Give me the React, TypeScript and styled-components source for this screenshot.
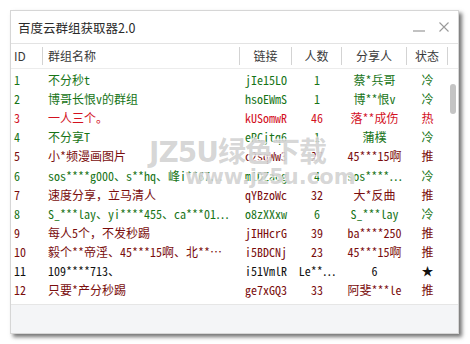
import styled, { createGlobalStyle } from 'styled-components';

const GlobalStyle = createGlobalStyle`
  html, body {
    margin: 0;
    padding: 0;
    background: #ffffff;
  }
  body {
    width: 470px;
    height: 344px;
    overflow: hidden;
  }
`;

const mono = `"Noto Sans Mono CJK SC", "Liberation Mono", "Noto Sans CJK SC", monospace`;

type Tone = 'green' | 'red' | 'maroon' | 'black';

const toneColor: Record<Tone, string> = {
  green: '#177417',
  red: '#d3121f',
  maroon: '#7a0d0d',
  black: '#111111',
};

const Page = styled.div`
  padding: 10px 0 0 10px;
`;

const Window = styled.div`
  position: relative;
  width: 447px;
  height: 322px;
  border: 1px solid #d6d6d6;
  background: #ffffff;
  box-shadow: 3px 3px 4px rgba(0, 0, 0, 0.55);
  display: flex;
  flex-direction: column;
  overflow: hidden;
`;

const TitleBar = styled.div`
  height: 32px;
  flex: none;
  display: flex;
  align-items: center;
  padding: 0 0 0 7px;
  border-bottom: 1px solid #e3e3e3;
`;

const Title = styled.div`
  flex: 1;
  font-family: "Noto Sans CJK SC", "Liberation Sans", sans-serif;
  font-size: 12.5px;
  color: #2a2a2a;
`;

const WinButton = styled.div`
  width: 22px;
  height: 22px;
  display: flex;
  align-items: center;
  justify-content: center;
  margin-right: 3px;
`;

const Header = styled.div`
  height: 24px;
  flex: none;
  display: grid;
  grid-template-columns: 32px 197px 52px 50px 65px 41px 10px;
  align-items: center;
  font-family: "Noto Sans CJK SC", "Liberation Sans", sans-serif;
  font-size: 12px;
  color: #3a3a3a;
  border-bottom: 1px solid #ececec;
`;

const HeadCell = styled.div<{ $align?: 'left' | 'center'; $pad?: number }>`
  height: 18px;
  line-height: 18px;
  padding-left: ${p => p.$pad ?? 0}px;
  text-align: ${p => p.$align ?? 'center'};
  border-right: 1px solid #d3d3d3;
  white-space: nowrap;
`;

const Body = styled.div`
  flex: 1;
  display: flex;
  padding-top: 1px;
`;

const Rows = styled.div`
  width: 437px;
`;

const Row = styled.div<{ $tone: Tone }>`
  height: 19.1px;
  display: grid;
  grid-template-columns: 32px 197px 52px 50px 65px 41px;
  align-items: center;
  font-family: ${mono};
  font-size: 12px;
  color: ${p => toneColor[p.$tone]};
`;

const Cell = styled.div<{ $align?: 'left' | 'center'; $pad?: number }>`
  padding-left: ${p => p.$pad ?? 0}px;
  text-align: ${p => p.$align ?? 'center'};
  white-space: nowrap;
  overflow: hidden;
`;

const ScrollTrack = styled.div`
  width: 10px;
  display: flex;
  justify-content: center;
  padding-top: 14px;
`;

const ScrollThumb = styled.div`
  width: 6px;
  height: 30px;
  border-radius: 3px;
  background: #c4c4c4;
`;

const Footer = styled.div`
  height: 28px;
  flex: none;
  background: #f4f5f7;
  border-top: 1px solid #e6e6e6;
`;

const Watermark = styled.div`
  position: absolute;
  left: 138px;
  top: 128px;
  font-family: "DejaVu Sans", "Noto Sans CJK SC", sans-serif;
  font-weight: bold;
  color: rgba(130, 130, 130, 0.32);
  text-shadow: 1px 1px 0 rgba(255, 255, 255, 0.8), -1px -1px 0 rgba(255, 255, 255, 0.8);
  pointer-events: none;
  line-height: 1;
`;

const MarkBig = styled.div`
  font-size: 28px;
  letter-spacing: -1px;
`;

const MarkSmall = styled.div`
  font-size: 21px;
  margin: 0 0 0 36px;
`;

type Group = {
  id: string;
  name: string;
  link: string;
  count: string;
  sharer: string;
  status: string;
  tone: Tone;
};

const groups: Group[] = [
  { id: '1', name: '不分秒t', link: 'jIe15LO', count: '1', sharer: '蔡*兵哥', status: '冷', tone: 'green' },
  { id: '2', name: '博哥长恨v的群组', link: 'hsoEWmS', count: '1', sharer: '博**恨v', status: '冷', tone: 'green' },
  { id: '3', name: '一人三个。', link: 'kUSomwR', count: '46', sharer: '落**成伤', status: '热', tone: 'red' },
  { id: '4', name: '不分享T', link: 'eRCjtq6', count: '1', sharer: '蒲樸', status: '冷', tone: 'green' },
  { id: '5', name: '小*频漫画图片', link: 'c2sqWw3', count: '27', sharer: '45***15啊', status: '推', tone: 'maroon' },
  { id: '6', name: 'sos****g000、s**hq、峰i**67…', link: 'mlDZacg', count: '4', sharer: 'sos****…', status: '冷', tone: 'green' },
  { id: '7', name: '速度分享，立马清人', link: 'qYBzoWc', count: '32', sharer: '大*反曲', status: '推', tone: 'maroon' },
  { id: '8', name: 'S_***lay、yi****455、ca***01…', link: 'o8zXXxw', count: '6', sharer: 'S_***lay', status: '冷', tone: 'green' },
  { id: '9', name: '每人5个，不发秒踢', link: 'jIHHcrG', count: '39', sharer: 'ba****250', status: '推', tone: 'maroon' },
  { id: '10', name: '毅个**帝淫、45***15啊、北**…', link: 'i5BDCNj', count: '23', sharer: '45***15啊', status: '推', tone: 'maroon' },
  { id: '11', name: '109****713、', link: 'i51VmlR', count: 'Le**…', sharer: '6', status: '★', tone: 'black' },
  { id: '12', name: '只要*产分秒踢', link: 'ge7xGQ3', count: '33', sharer: '阿斐***le', status: '推', tone: 'maroon' },
];

export default function App() {
  return (
    <>
      <GlobalStyle />
      <Page>
        <Window>
          <TitleBar>
            <Title>百度云群组获取器2.0</Title>
            <WinButton>
              <svg width="14" height="14" viewBox="0 0 14 14">
                <line x1="1" y1="11" x2="13" y2="11" stroke="#9a9a9a" strokeWidth="1.2" />
              </svg>
            </WinButton>
            <WinButton>
              <svg width="12" height="12" viewBox="0 0 12 12">
                <path d="M1.5 1.5 L10.5 10.5 M10.5 1.5 L1.5 10.5" stroke="#9a9a9a" strokeWidth="1.1" />
              </svg>
            </WinButton>
          </TitleBar>

          <Header>
            <HeadCell $align="left" $pad={3}>ID</HeadCell>
            <HeadCell $align="left" $pad={5}>群组名称</HeadCell>
            <HeadCell>链接</HeadCell>
            <HeadCell>人数</HeadCell>
            <HeadCell>分享人</HeadCell>
            <HeadCell>状态</HeadCell>
            <div />
          </Header>

          <Body>
            <Rows>
              {groups.map(g => (
                <Row key={g.id} $tone={g.tone}>
                  <Cell $align="left" $pad={3}>{g.id}</Cell>
                  <Cell $align="left" $pad={5}>{g.name}</Cell>
                  <Cell>{g.link}</Cell>
                  <Cell>{g.count}</Cell>
                  <Cell>{g.sharer}</Cell>
                  <Cell>{g.status}</Cell>
                </Row>
              ))}
            </Rows>
            <ScrollTrack>
              <ScrollThumb />
            </ScrollTrack>
          </Body>

          <Footer />

          <Watermark>
            <MarkBig>JZ5U绿色下载</MarkBig>
            <MarkSmall>www.jz5u.com</MarkSmall>
          </Watermark>
        </Window>
      </Page>
    </>
  );
}
